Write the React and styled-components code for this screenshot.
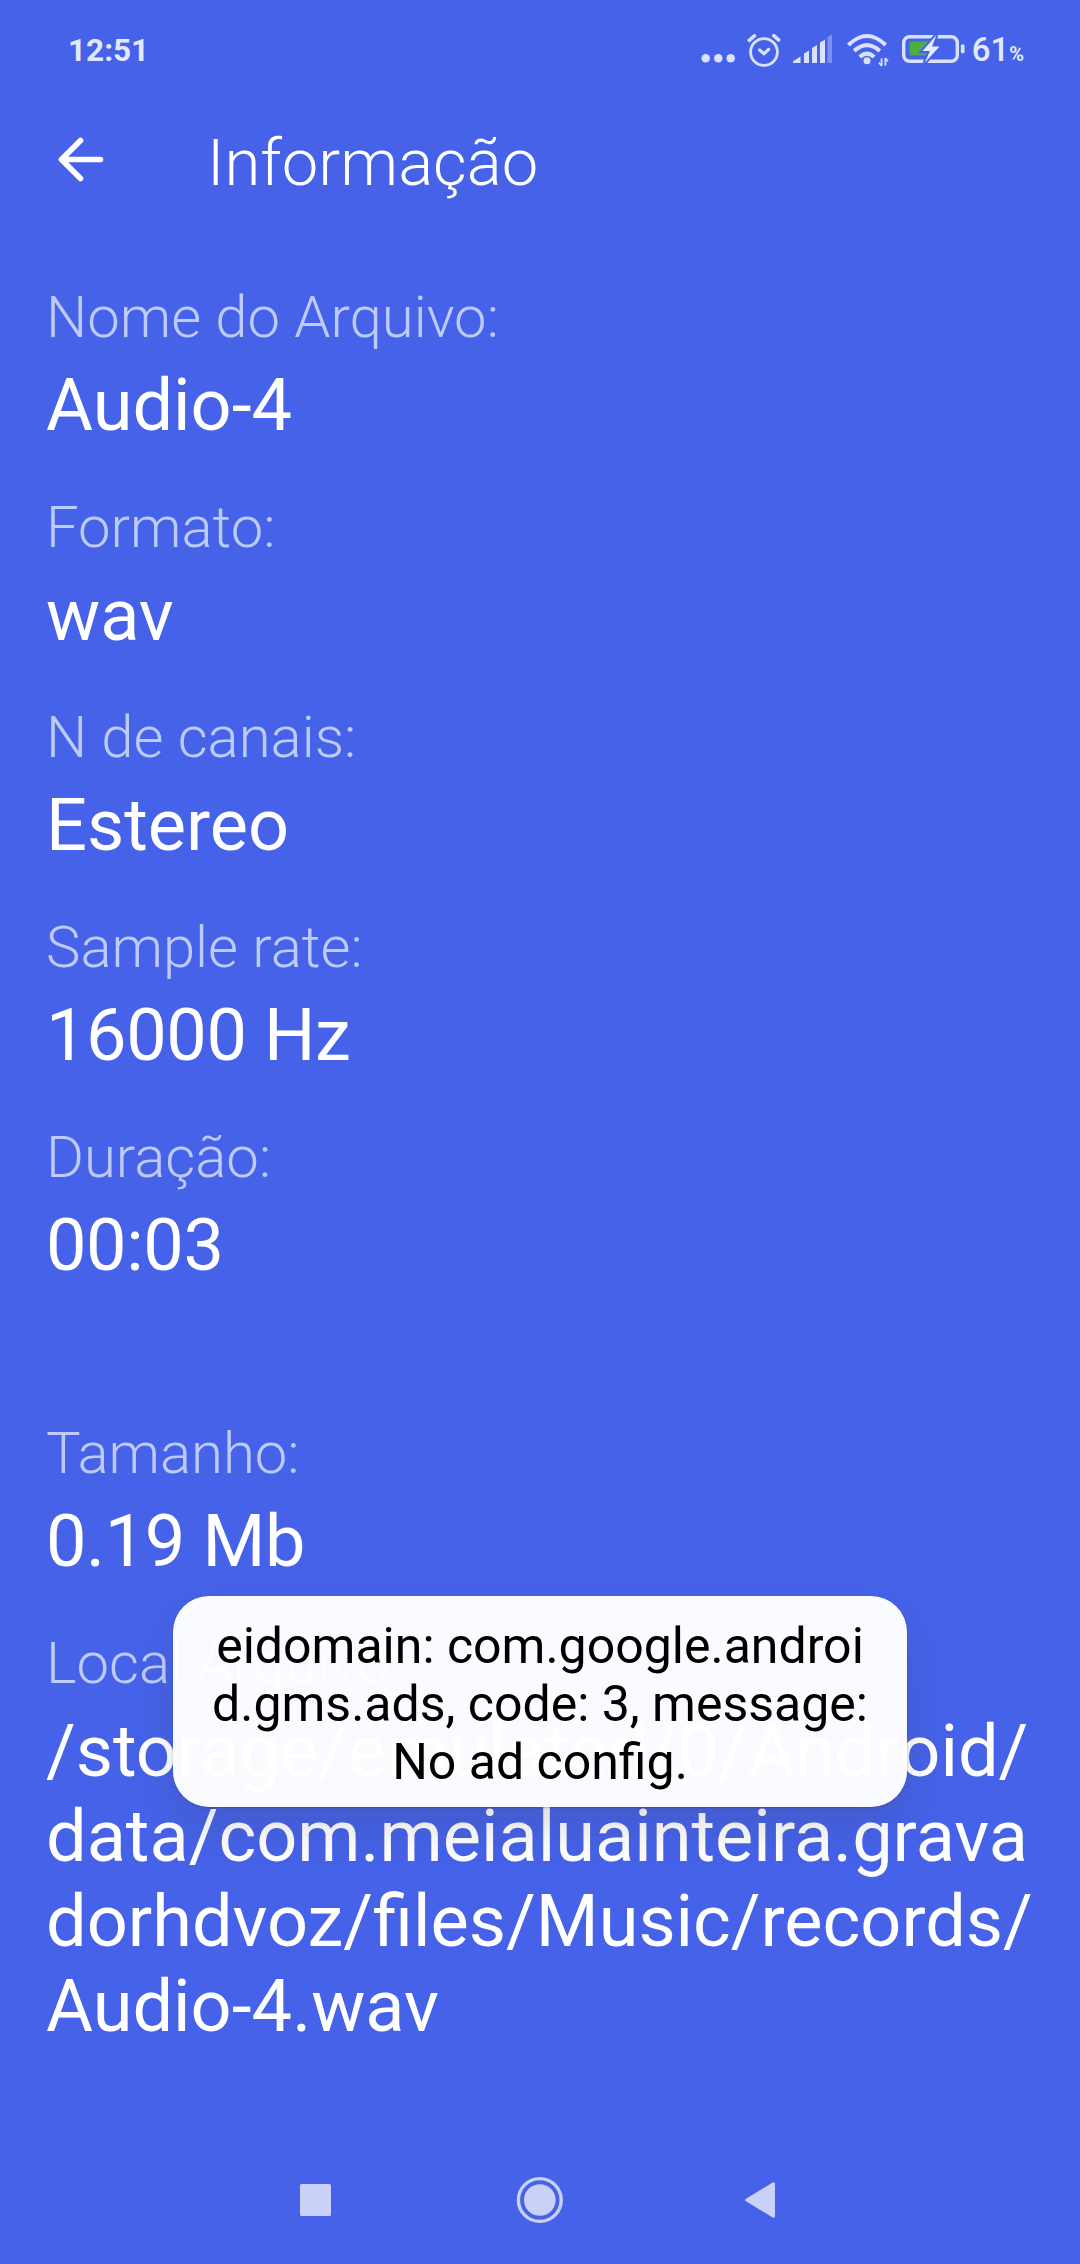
import React from "react";
import styled, { createGlobalStyle } from "styled-components";

const Global = createGlobalStyle`
  *, *::before, *::after { box-sizing: border-box; }
  body { margin: 0; background: #4562e9; }
`;

const Screen = styled.div`
  position: relative;
  display: flex;
  flex-direction: column;
  width: 1080px;
  height: 2264px;
  overflow: hidden;
  background: #4562e9;
  color: #fff;
  font-family: Roboto, "Liberation Sans", sans-serif;
`;

const StatusBar = styled.header`
  display: flex;
  justify-content: space-between;
  height: 100px;
  padding: 0 56px 0 68px;
  color: #e3e9fd;
`;

const Clock = styled.time`
  margin-top: 33px;
  font-size: 31.5px;
  line-height: 36px;
  font-weight: 700;
`;

const StatusIcons = styled.div`
  display: flex;
  align-items: flex-start;
  padding-top: 30px;
`;

const StatusIcon = styled.svg`
  display: block;
  flex: none;
  margin-right: ${(p) => p.$gap}px;
`;

const Charge = styled.span`
  display: flex;
  align-items: baseline;
  font-size: 33px;
  line-height: 40px;
  font-weight: 500;
`;

const Percent = styled.small`
  font-size: 20px;
  font-weight: 700;
`;

const AppBar = styled.div`
  display: flex;
  align-items: center;
  height: 120px;
  padding-left: 56px;
`;

const BackButton = styled.button`
  display: flex;
  width: 50px;
  height: 50px;
  padding: 0;
  border: 0;
  background: none;
  color: inherit;
`;

const Title = styled.h1`
  margin: 5px 0 0 101px;
  font-size: 65.2px;
  line-height: 76px;
  font-weight: 300;
`;

const Details = styled.dl`
  display: flex;
  flex-direction: column;
  flex: 1;
  margin: 0;
  padding: 63px 0 0 46px;
`;

const Field = styled.div`
  display: flex;
  flex-direction: column;
  gap: 12px;
  margin-bottom: ${(p) => (p.$wide ? 131 : 45)}px;
`;

const Label = styled.dt`
  font-size: 58px;
  line-height: 68px;
  font-weight: 300;
  color: #bdcbfa;
`;

const Value = styled.dd`
  margin: 0;
  font-size: 72.1px;
  line-height: 85px;
  font-weight: 400;
  letter-spacing: ${(p) => (p.$numeric ? "-0.4px" : "normal")};
`;

const Line = styled.span`
  display: block;
  white-space: nowrap;
`;

const Toast = styled.div`
  position: absolute;
  left: 173px;
  top: 1596px;
  width: 734px;
  height: 211px;
  padding-top: 21px;
  border-radius: 36px;
  background: rgba(255, 255, 255, 0.973);
  box-shadow: 0 22px 50px -6px rgba(60, 60, 60, 0.2), 0 1px 2px rgba(60, 60, 60, 0.35);
  color: #000;
  font-size: 50px;
  line-height: 58px;
  text-align: center;
`;

const NavBar = styled.nav`
  display: flex;
  align-items: center;
  justify-content: space-between;
  height: 124px;
  padding: 0 300px 4px;
  color: #c9d1f9;
`;

const fields = [
  { label: "Nome do Arquivo:", lines: ["Audio-4"] },
  { label: "Formato:", lines: ["wav"] },
  { label: "N de canais:", lines: ["Estereo"] },
  { label: "Sample rate:", lines: ["16000 Hz"], numeric: true },
  { label: "Duração:", lines: ["00:03"], numeric: true, wide: true },
  { label: "Tamanho:", lines: ["0.19 Mb"], numeric: true },
  {
    label: "Local Arquivo:",
    lines: [
      "/storage/emulated/0/Android/",
      "data/com.meialuainteira.grava",
      "dorhdvoz/files/Music/records/",
      "Audio-4.wav",
    ],
  },
];

const toastLines = [
  "eidomain: com.google.androi",
  "d.gms.ads, code: 3, message:",
  "No ad config.",
];

const MoreDots = () => (
  <StatusIcon width="34" height="40" $gap={11} fill="#d9e1fd">
    <circle cx="4.7" cy="28.3" r="4.3" />
    <circle cx="17.3" cy="28.3" r="4.3" />
    <circle cx="29.7" cy="28.3" r="4.3" />
  </StatusIcon>
);

const Alarm = () => (
  <StatusIcon width="36" height="40" $gap={10} fill="none" stroke="#d9e1fd" strokeLinecap="round" strokeLinejoin="round">
    <circle cx="18" cy="22" r="13.4" strokeWidth="2.8" />
    <path d="M13.6 20 18 23.8 22.6 19.4" strokeWidth="3.2" />
    <path d="M3.2 10.4 8.4 5.8M32.6 9.8 27.8 5.6" strokeWidth="3.6" />
  </StatusIcon>
);

const Signal = () => (
  <StatusIcon width="40" height="40" $gap={15} fill="#d9e1fd">
    <path d="M1 33V31.2L8.5 26.5V33Z" />
    <path d="M12 33V23.5L17 20.5V33Z" />
    <path d="M20 33V18L25 15V33Z" />
    <path d="M28 33V12.5L33 9.5V33Z" />
    <path d="M35.5 33V7L40 4.5V33Z" opacity=".38" />
  </StatusIcon>
);

const Wifi = () => (
  <StatusIcon width="42" height="40" $gap={13} fill="none" stroke="#d9e1fd" strokeWidth="4">
    <path d="M1.4 15Q20 -3 38.6 15" />
    <path d="M7.2 21Q20 9.2 32.8 21" />
    <path d="M12.8 27Q20 20.2 27.2 27" />
    <circle cx="20" cy="30.8" r="3.5" fill="#d9e1fd" stroke="none" />
    <path d="M34.6 28.5V36M38.4 28V35.5" strokeWidth="1.8" />
    <path d="M31.8 32.5 34.6 36M41 31.5 38.4 28" strokeWidth="1.6" />
  </StatusIcon>
);

const Battery = () => (
  <StatusIcon width="64" height="40" $gap={6}>
    <rect x="1.7" y="6.7" width="53.6" height="24.6" rx="6" fill="none" stroke="#d9e1fd" strokeWidth="3.4" />
    <rect x="7.5" y="11.5" width="20" height="14" rx="1.5" fill="#4cae3f" />
    <rect x="58.8" y="14.3" width="3.8" height="9" rx="1.5" fill="#d9e1fd" />
    <path
      d="M34.5 5 20.5 21H28L22.5 33 37.5 16.5H30Z"
      fill="#e6ecfe"
      stroke="#4562e9"
      strokeWidth="4"
      paintOrder="stroke"
    />
  </StatusIcon>
);

export default function App() {
  return (
    <>
      <Global />
      <Screen>
        <StatusBar>
          <Clock>12:51</Clock>
          <StatusIcons>
            <MoreDots />
            <Alarm />
            <Signal />
            <Wifi />
            <Battery />
            <Charge>
              61<Percent>%</Percent>
            </Charge>
          </StatusIcons>
        </StatusBar>

        <AppBar>
          <BackButton aria-label="Voltar">
            <svg width="50" height="50" fill="none" stroke="#fff" strokeWidth="5.6" strokeLinecap="round" strokeLinejoin="round">
              <path d="M44.5 24.5H5.5M24.5 5.5 5.5 24.5 24.5 43.5" />
            </svg>
          </BackButton>
          <Title>Informação</Title>
        </AppBar>

        <Details>
          {fields.map((f) => (
            <Field key={f.label} $wide={f.wide}>
              <Label>{f.label}</Label>
              <Value $numeric={f.numeric}>
                {f.lines.map((l) => (
                  <Line key={l}>{l}</Line>
                ))}
              </Value>
            </Field>
          ))}
        </Details>

        <NavBar>
          <svg width="31" height="32" fill="currentColor">
            <rect width="31" height="32" rx="1.5" />
          </svg>
          <svg width="52" height="48">
            <circle cx="27.8" cy="24" r="21.4" fill="none" stroke="currentColor" strokeWidth="3.4" />
            <circle cx="27.8" cy="24" r="15.8" fill="currentColor" />
          </svg>
          <svg width="35" height="38" fill="currentColor" stroke="currentColor" strokeWidth="3" strokeLinejoin="round">
            <path d="M1.8 19 28.5 2.8V35.2Z" />
          </svg>
        </NavBar>

        <Toast role="status">
          {toastLines.map((l) => (
            <Line key={l}>{l}</Line>
          ))}
        </Toast>
      </Screen>
    </>
  );
}
